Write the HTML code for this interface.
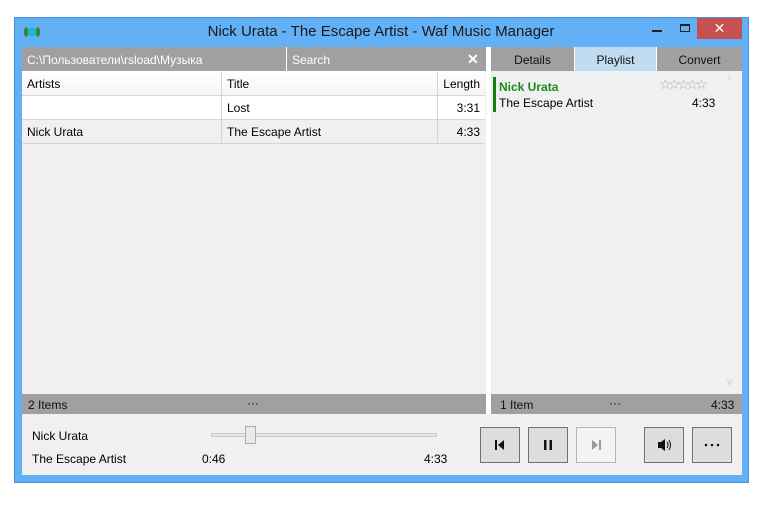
<!DOCTYPE html>
<html><head><meta charset="utf-8"><style>
*{box-sizing:border-box;margin:0;padding:0}
body{width:774px;height:507px;background:#fff;font-family:"Segoe UI","Liberation Sans",sans-serif;font-size:12px;color:#000;position:relative;overflow:hidden}
.a{position:absolute}
.win{left:14px;top:17px;width:735px;height:466px;background:#62b0f6;border:1px solid #4a90d9}
.client{left:22px;top:47px;width:720px;height:428px;background:#f0f0f0}
.bar{background:#a0a0a0;color:#fff}
.t{white-space:nowrap}
.btn{top:427px;width:40px;height:36px;background:#dddddd;border:1px solid #707070}
.cell{border-right:1px solid #d5d5d5;border-bottom:1px solid #d5d5d5;height:24px;line-height:25px;padding-left:5px}
</style></head><body>
<div class="a win"></div>
<svg class="a" style="left:23px;top:26px" width="18" height="12"><ellipse cx="9" cy="6" rx="6" ry="4.5" fill="#1fb8d8"/><ellipse cx="3" cy="6" rx="2.2" ry="5" fill="#3a8a3a"/><ellipse cx="15" cy="6" rx="2.2" ry="5" fill="#3a8a3a"/></svg>
<div class="a t" style="left:0;width:762px;top:23px;text-align:center;font-size:15px;color:#1a1a1a">Nick Urata - The Escape Artist - Waf Music Manager</div>
<div class="a" style="left:652px;top:30px;width:10px;height:2px;background:#222"></div>
<div class="a" style="left:680px;top:24px;width:10px;height:8px;border:1px solid #222;border-top-width:2px"></div>
<div class="a" style="left:697px;top:18px;width:45px;height:21px;background:#c75050;color:#fff;text-align:center;font-size:14px;line-height:20px">✕</div>
<div class="a client"></div>
<div class="a bar" style="left:22px;top:47px;width:464px;height:24px"></div>
<div class="a t" style="left:27px;top:53px;color:#fff">C:\Пользователи\rsload\Музыка</div>
<div class="a" style="left:286px;top:47px;width:1px;height:24px;background:#fff"></div>
<div class="a t" style="left:292px;top:53px;color:#fff">Search</div>
<div class="a t" style="left:467px;top:51px;color:#fff;font-size:14px;font-weight:bold">✕</div>
<div class="a" style="left:22px;top:71px;width:463px;height:25px;background:linear-gradient(#fff,#f4f4f4)"></div>
<div class="a cell" style="left:22px;top:72px;width:200px">Artists</div>
<div class="a cell" style="left:222px;top:72px;width:216px">Title</div>
<div class="a cell" style="left:438px;top:72px;width:47px;text-align:right;padding-right:5px;border-right:none">Length</div>
<div class="a" style="left:22px;top:96px;width:463px;height:24px;background:#fff"></div>
<div class="a cell" style="left:22px;top:96px;width:200px"></div>
<div class="a cell" style="left:222px;top:96px;width:216px">Lost</div>
<div class="a cell" style="left:438px;top:96px;width:47px;text-align:right;padding-right:5px;border-right:none">3:31</div>
<div class="a cell" style="left:22px;top:120px;width:200px">Nick Urata</div>
<div class="a cell" style="left:222px;top:120px;width:216px">The Escape Artist</div>
<div class="a cell" style="left:438px;top:120px;width:47px;text-align:right;padding-right:5px;border-right:none">4:33</div>
<div class="a bar" style="left:22px;top:394px;width:464px;height:20px"></div>
<div class="a t" style="left:28px;top:398px;color:#111">2 Items</div>
<div class="a t" style="left:247px;top:396px;color:#111">···</div>
<div class="a bar" style="left:491px;top:47px;width:251px;height:24px"></div>
<div class="a" style="left:574px;top:47px;width:83px;height:24px;background:#bfdcf0;border-left:1px solid #fff;border-right:1px solid #fff"></div>
<div class="a t" style="left:491px;width:83px;top:53px;text-align:center;color:#111">Details</div>
<div class="a t" style="left:574px;width:83px;top:53px;text-align:center;color:#111">Playlist</div>
<div class="a t" style="left:658px;width:83px;top:53px;text-align:center;color:#111">Convert</div>
<div class="a" style="left:486px;top:47px;width:5px;height:367px;background:#fff"></div>
<div class="a" style="left:493px;top:77px;width:3px;height:35px;background:#108010"></div>
<div class="a t" style="left:499px;top:80px;color:#1a8a1a;font-weight:bold">Nick Urata</div>
<div class="a t" style="left:499px;top:96px">The Escape Artist</div>
<div class="a t" style="left:692px;top:96px">4:33</div>
<div class="a t" style="left:659px;top:76px;color:#aaa;font-size:14px;letter-spacing:-3.5px">☆☆☆☆☆</div>
<div class="a t" style="left:727px;top:76px;color:#ccc;font-size:10px">^</div>
<div class="a t" style="left:727px;top:377px;color:#ccc;font-size:10px">v</div>
<div class="a bar" style="left:491px;top:394px;width:251px;height:20px"></div>
<div class="a t" style="left:500px;top:398px;color:#111">1 Item</div>
<div class="a t" style="left:609px;top:396px;color:#111">···</div>
<div class="a t" style="left:711px;top:398px;color:#111">4:33</div>
<div class="a t" style="left:32px;top:429px">Nick Urata</div>
<div class="a t" style="left:32px;top:452px">The Escape Artist</div>
<div class="a t" style="left:202px;top:452px">0:46</div>
<div class="a t" style="left:424px;top:452px">4:33</div>
<div class="a" style="left:211px;top:433px;width:226px;height:4px;background:#e6e6e6;border:1px solid #ccc"></div>
<div class="a" style="left:245px;top:426px;width:11px;height:18px;background:#eaeaea;border:1px solid #aaa"></div>
<div class="a btn" style="left:480px"><svg width="38" height="34"><rect x="14" y="12" width="2" height="10" fill="#111"/><path d="M17 17 L23 12 L23 22Z" fill="#111"/></svg></div>
<div class="a btn" style="left:528px"><svg width="38" height="34"><rect x="15" y="12" width="2.5" height="10" fill="#111"/><rect x="20.5" y="12" width="2.5" height="10" fill="#111"/></svg></div>
<div class="a btn" style="left:576px;background:#f4f4f4;border-color:#b5b5b5"><svg width="38" height="34"><path d="M15 12 L21 17 L15 22Z" fill="#999"/><rect x="22" y="12" width="2" height="10" fill="#999"/></svg></div>
<div class="a btn" style="left:644px"><svg width="38" height="34"><rect x="13" y="14" width="3" height="6" fill="#111"/><path d="M16 14 L20 11 L20 23 L16 20Z" fill="#111"/><path d="M22 14 Q24 17 22 20" stroke="#111" fill="none"/><path d="M24 12 Q27 17 24 22" stroke="#111" fill="none"/></svg></div>
<div class="a btn" style="left:692px"><svg width="38" height="34"><circle cx="13" cy="17" r="1.3" fill="#111"/><circle cx="19" cy="17" r="1.3" fill="#111"/><circle cx="25" cy="17" r="1.3" fill="#111"/></svg></div>
</body></html>
